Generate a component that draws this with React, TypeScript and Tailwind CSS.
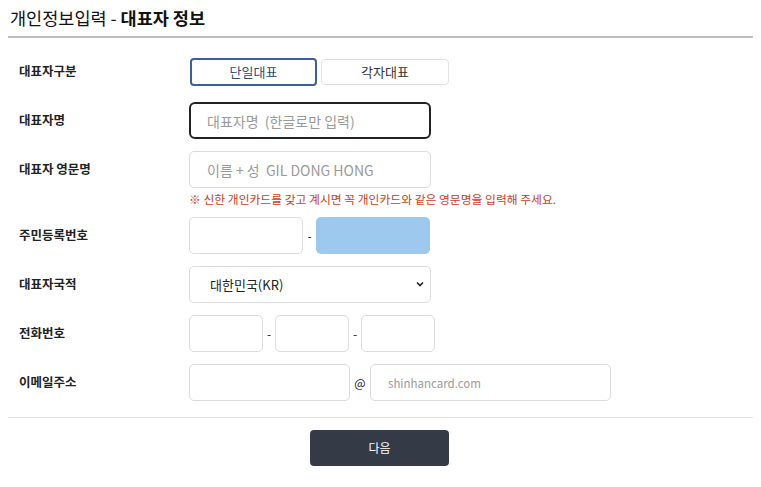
import { useState } from "react";

const font = { fontFamily: '"Noto Sans CJK KR", "Noto Sans", sans-serif' };

const inputCls =
  "h-[37px] rounded-[5px] border border-[#dcdcdc] bg-white px-[17px] text-[#222] outline-none placeholder:text-[#9a9a9a]";

function Row({ label, children }: { label: string; children: React.ReactNode }) {
  return (
    <div className="flex h-[37px] items-center">
      <div className="w-[181px] shrink-0 pl-[11px] text-[12.5px] font-bold text-[#222]">{label}</div>
      <div className="flex items-center">{children}</div>
    </div>
  );
}

export default function App() {
  const [kind, setKind] = useState<"single" | "each">("single");

  return (
    <div className="min-h-[487px] bg-white px-2" style={font}>
      <div className="flex h-[38px] items-center border-b-2 border-[#bdbdbd] pl-[2px] text-[17.5px] text-[#111]">
        <span>개인정보입력 - </span>
        <span className="ml-1 font-bold">대표자 정보</span>
      </div>

      <div className="flex flex-col gap-3 pt-[15px]">
        <Row label="대표자구분">
          <div className="flex gap-[4px] pl-px">
            <button
              type="button"
              onClick={() => setKind("single")}
              className={
                kind === "single"
                  ? "h-[28px] w-[127px] rounded-[4px] border-2 border-[#3b5f9a] text-[13px] text-[#2d4a78]"
                  : "h-[26px] w-[127px] rounded-[4px] border border-[#e2e2e2] text-[13px] text-[#333]"
              }
            >
              단일대표
            </button>
            <button
              type="button"
              onClick={() => setKind("each")}
              className={
                kind === "each"
                  ? "h-[28px] w-[128px] rounded-[4px] border-2 border-[#3b5f9a] text-[13px] text-[#2d4a78]"
                  : "mt-px h-[26px] w-[128px] rounded-[4px] border border-[#e2e2e2] text-[13px] text-[#333]"
              }
            >
              각자대표
            </button>
          </div>
        </Row>

        <Row label="대표자명">
          <input
            className="h-[37px] w-[242px] rounded-[6px] border-2 border-[#222] px-[16px] text-[14px] outline-none placeholder:text-[#9a9a9a]"
            placeholder="대표자명  (한글로만 입력)"
          />
        </Row>

        <div className="flex flex-col">
          <Row label="대표자 영문명">
            <input className={`${inputCls} w-[242px] text-[14px]`} placeholder="이름 + 성  GIL DONG HONG" />
          </Row>
          <div className="pl-[181px] pt-[4px] text-[11.8px] leading-[13px] text-[#c4411d]">
            ※ 신한 개인카드를 갖고 계시면 꼭 개인카드와 같은 영문명을 입력해 주세요.
          </div>
        </div>

        <Row label="주민등록번호">
          <input className={`${inputCls} w-[114px] text-[14px]`} />
          <span className="w-[13px] text-center text-[12px] text-[#222]">-</span>
          <div className="h-[37px] w-[114px] rounded-[5px] bg-[#9ec9ee]" />
        </Row>

        <Row label="대표자국적">
          <div className="relative">
            <select
              className="h-[37px] w-[242px] appearance-none rounded-[5px] border border-[#dcdcdc] bg-white pl-[20px] text-[13px] text-[#222] outline-none"
              defaultValue="KR"
            >
              <option value="KR">대한민국(KR)</option>
            </select>
            <svg
              className="pointer-events-none absolute right-[7px] top-[15px]"
              width="8"
              height="6"
              viewBox="0 0 8 6"
            >
              <path d="M1 1.5 L4 4.5 L7 1.5" fill="none" stroke="#222" strokeWidth="1.6" />
            </svg>
          </div>
        </Row>

        <Row label="전화번호">
          <input className={`${inputCls} w-[74px] text-[14px]`} />
          <span className="w-[12px] text-center text-[12px] text-[#222]">-</span>
          <input className={`${inputCls} w-[74px] text-[14px]`} />
          <span className="w-[12px] text-center text-[12px] text-[#222]">-</span>
          <input className={`${inputCls} w-[74px] text-[14px]`} />
        </Row>

        <Row label="이메일주소">
          <input className={`${inputCls} w-[161px] text-[14px]`} />
          <span className="w-[20px] text-center text-[12px] text-[#222]">@</span>
          <input className={`${inputCls} w-[241px] text-[11.5px]`} placeholder="shinhancard.com" />
        </Row>
      </div>

      <div className="mt-[16px] border-t border-[#e0e0e0] pt-[12px]">
        <div className="flex justify-center">
          <button
            type="button"
            className="ml-[-2px] h-[36px] w-[139px] rounded-[4px] bg-[#343a46] text-[12px] text-white"
          >
            다음
          </button>
        </div>
      </div>
    </div>
  );
}
